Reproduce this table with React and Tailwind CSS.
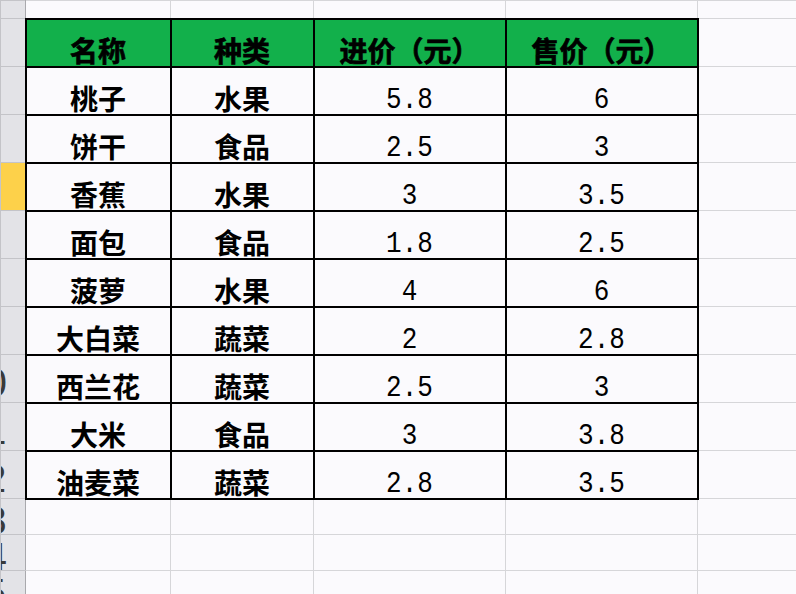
const rows = [
  ["桃子", "水果", "5.8", "6"],
  ["饼干", "食品", "2.5", "3"],
  ["香蕉", "水果", "3", "3.5"],
  ["面包", "食品", "1.8", "2.5"],
  ["菠萝", "水果", "4", "6"],
  ["大白菜", "蔬菜", "2", "2.8"],
  ["西兰花", "蔬菜", "2.5", "3"],
  ["大米", "食品", "3", "3.8"],
  ["油麦菜", "蔬菜", "2.8", "3.5"],
];

const cjk = { fontFamily: '"Noto Sans CJK SC", "Noto Sans", sans-serif' };
const mono = { fontFamily: '"Liberation Mono", "DejaVu Sans Mono", monospace' };

// row number column is scrolled mostly off the left edge,
// only the last digit of two-digit numbers peeks out
const RowHead = ({ n, h, active }) => (
  <td
    className={`p-0 border border-[#c4c4c8] border-r-[#a9a9ad] ${
      active ? "bg-[#fdd14a]" : "bg-[#e3e3e7]"
    }`}
  >
    <div className={`w-[25px] overflow-hidden flex items-center ${h}`}>
      {n.length > 1 && (
        <div className="w-[7px] shrink-0 flex justify-end pt-[8px]">
          <span
            className="whitespace-nowrap text-[38px] leading-[0] text-[#3a3a3a]"
            style={{ fontFamily: '"DejaVu Sans", sans-serif' }}
          >
            {n}
          </span>
        </div>
      )}
    </div>
  </td>
);

const Grid = () => <td className="p-0 border border-[#d6d6d9]" />;

export default function App() {
  return (
    <div className="w-[796px] h-[594px] overflow-hidden bg-[#fbfafd]">
      <table className="table-fixed border-collapse w-[796px]">
        <colgroup>
          <col className="w-[25px]" />
          <col className="w-[145px]" />
          <col className="w-[143px]" />
          <col className="w-[192px]" />
          <col className="w-[192px]" />
          <col className="w-[99px]" />
        </colgroup>
        <tbody>
          <tr>
            <RowHead n="2" h="h-[17px]" />
            <Grid />
            <Grid />
            <Grid />
            <Grid />
            <Grid />
          </tr>
          <tr>
            <RowHead n="3" h="h-[47px]" />
            {["名称", "种类", "进价（元）", "售价（元）"].map((h) => (
              <td
                key={h}
                className="p-0 pb-[2px] align-bottom text-center border-2 border-black bg-[#12b04b] text-[28px] leading-none font-bold text-black [-webkit-text-stroke:0.7px_black]"
                style={cjk}
              >
                {h}
              </td>
            ))}
            <Grid />
          </tr>
          {rows.map((r, i) => (
            <tr key={i}>
              <RowHead n={String(i + 4)} h="h-[47px]" active={i === 2} />
              <td
                className="p-0 pb-[2px] align-bottom text-center border-2 border-black text-[28px] leading-none font-semibold text-black"
                style={cjk}
              >
                {r[0]}
              </td>
              <td
                className="p-0 pb-[2px] align-bottom text-center border-2 border-black text-[28px] leading-none font-semibold text-black"
                style={cjk}
              >
                {r[1]}
              </td>
              {[r[2], r[3]].map((v, j) => (
                <td
                  key={j}
                  className="p-0 align-bottom text-center border-2 border-black text-[26px] leading-none text-black"
                  style={mono}
                >
                  <span className="inline-block scale-y-[1.15] origin-bottom translate-y-[1px]">{v}</span>
                </td>
              ))}
              <Grid />
            </tr>
          ))}
          {["13", "14", "15"].map((n) => (
            <tr key={n}>
              <RowHead n={n} h="h-[35px]" />
              <Grid />
              <Grid />
              <Grid />
              <Grid />
              <Grid />
            </tr>
          ))}
        </tbody>
      </table>
    </div>
  );
}
